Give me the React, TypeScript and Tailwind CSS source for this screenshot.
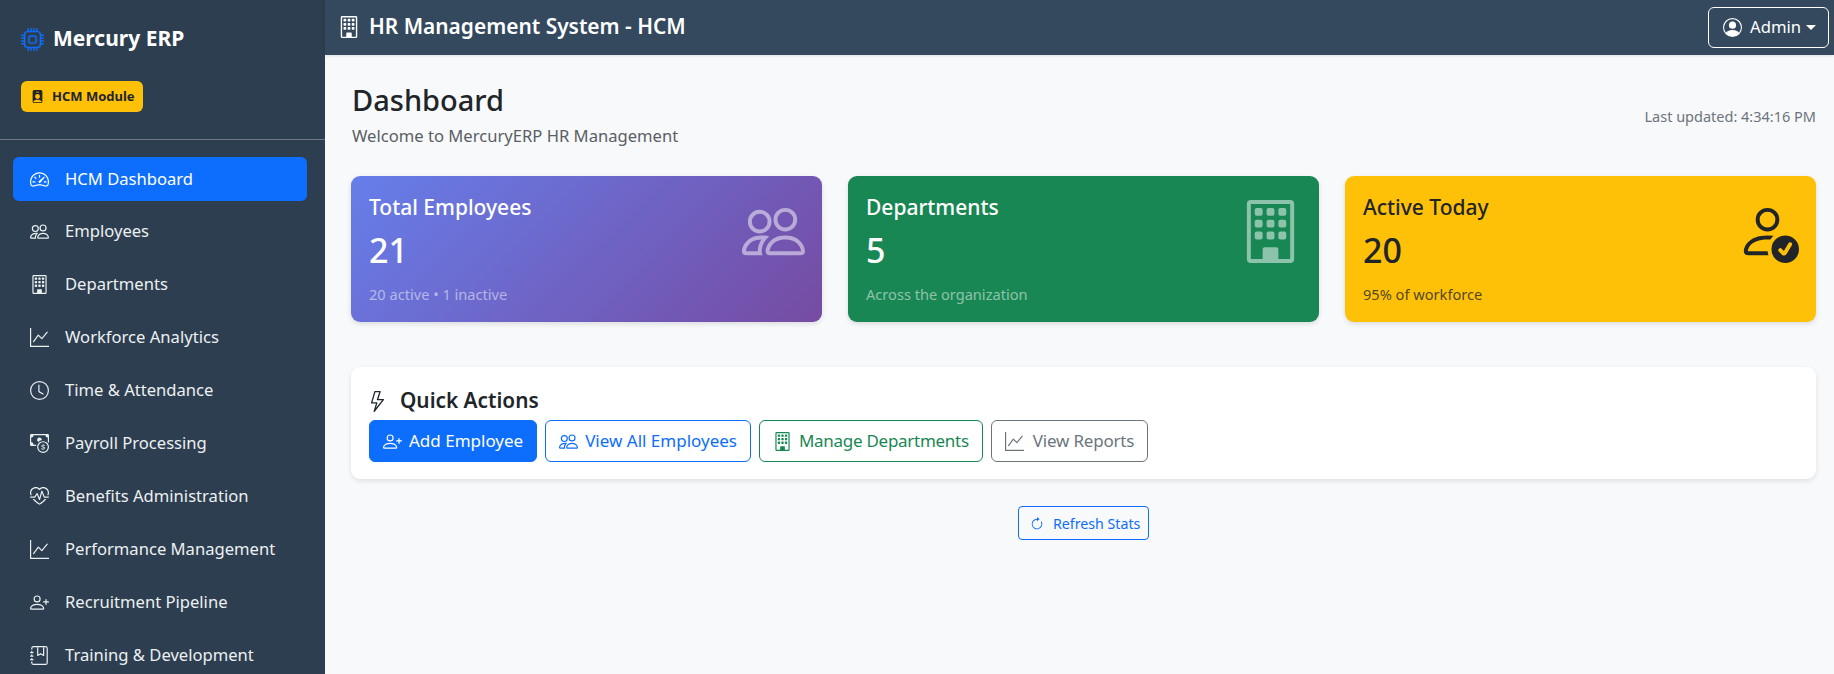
import React from "react";
import {
  BsCpu, BsPersonBadgeFill, BsSpeedometer2, BsPeople, BsBuilding, BsGraphUp, BsClock, BsCashCoin,
  BsHeartPulse, BsPersonPlus, BsJournalBookmark, BsLightning, BsArrowClockwise, BsPersonCircle, BsPersonCheck,
} from "react-icons/bs";

const nav = [
  { label: "HCM Dashboard", Icon: BsSpeedometer2, active: true },
  { label: "Employees", Icon: BsPeople },
  { label: "Departments", Icon: BsBuilding },
  { label: "Workforce Analytics", Icon: BsGraphUp },
  { label: "Time & Attendance", Icon: BsClock },
  { label: "Payroll Processing", Icon: BsCashCoin },
  { label: "Benefits Administration", Icon: BsHeartPulse },
  { label: "Performance Management", Icon: BsGraphUp },
  { label: "Recruitment Pipeline", Icon: BsPersonPlus },
  { label: "Training & Development", Icon: BsJournalBookmark },
];

function StatCard({ title, value, sub, Icon, bg, text, subC, iconC }: any) {
  return (
    <div className={`flex-1 h-[146px] rounded-[9px] shadow-[0_2px_5px_rgba(0,0,0,0.12)] pl-[18px] pr-[17px] pt-[16px] flex justify-between ${bg} ${text}`}>
      <div>
        <div className="text-[21px] leading-[30px] font-medium">{title}</div>
        <div className="text-[34px] leading-[44px] font-medium mt-[6px]">{value}</div>
        <div className={`text-[14.6px] leading-[21px] mt-[12px] ${subC}`}>{sub}</div>
      </div>
      <Icon className={`text-[63px] mt-[8px] ${iconC}`} />
    </div>
  );
}

function Btn({ Icon, label, cls }: any) {
  return (
    <div className={`h-[42px] px-[13px] border rounded-[6px] flex items-center text-[17px] ${cls}`}>
      <Icon className="text-[19px]" />
      <span>{label}</span>
    </div>
  );
}

export default function App() {
  return (
    <div className="flex h-[674px] overflow-hidden bg-[#f8f9fa] font-['Noto_Sans','Open_Sans',sans-serif] text-[#212529]">
      <aside className="w-[325px] shrink-0 bg-[#2c3e50] text-[#ecf0f1] overflow-hidden">
        <div className="h-[140px] border-b border-[#6b7784] pl-[21px] pt-[22px]">
          <div className="flex items-center gap-[9px] h-[34px]">
            <BsCpu className="text-[23px] text-[#0d6efd]" />
            <span className="text-[21px] font-bold text-white">Mercury ERP</span>
          </div>
          <div className="mt-[25px] inline-flex items-center gap-[8px] h-[31px] w-[122px] pl-[10px] rounded-[6px] bg-[#ffc107] text-[#212529]">
            <BsPersonBadgeFill className="text-[13px]" />
            <span className="text-[13px] font-bold">HCM Module</span>
          </div>
        </div>
        <nav className="px-[13px] pt-[17px]">
          {nav.map(({ label, Icon, active }) => (
            <div key={label} className={`h-[44px] mb-[8.9px] w-[294px] rounded-[6px] flex items-center pl-[17px] gap-[16px] ${active ? "bg-[#0d6efd] text-white" : ""}`}>
              <Icon className="text-[19px] shrink-0" />
              <span className="text-[16.6px] whitespace-nowrap">{label}</span>
            </div>
          ))}
        </nav>
      </aside>
      <div className="flex-1 min-w-0 flex flex-col">
        <header className="h-[55px] shrink-0 bg-[#34495e] text-white flex items-center justify-between pl-[13px] pr-[5px] pb-[1px] shadow-[0_1px_3px_rgba(0,0,0,0.1)]">
          <div className="flex items-center gap-[9px]">
            <BsBuilding className="text-[22px]" />
            <span className="text-[20.9px] font-semibold">HR Management System - HCM</span>
          </div>
          <div className="h-[41px] w-[121px] border border-white rounded-[6px] flex items-center pl-[14px] gap-[8px] text-[16.7px]">
            <BsPersonCircle className="text-[19px]" />
            <span>Admin</span>
            <span className="w-0 h-0 border-x-[5px] border-x-transparent border-t-[5px] border-t-white -ml-[3px]"></span>
          </div>
        </header>
        <main className="flex-1 pl-[26px] pr-[18px] pt-[25px]">
          <div className="flex justify-between items-start h-[96px]">
            <div>
              <h1 className="text-[29px] leading-[40px] font-medium pl-[1px]">Dashboard</h1>
              <p className="text-[16.6px] leading-[26px] mt-[3px] pl-[1px] text-[#595f66]">Welcome to MercuryERP HR Management</p>
            </div>
            <div className="text-[14.5px] leading-[21px] text-[#6c757d] mt-[26px]">Last updated: 4:34:16 PM</div>
          </div>
          <div className="flex gap-[26px]">
            <StatCard title="Total Employees" value="21" sub="20 active • 1 inactive" Icon={BsPeople}
              bg="bg-[linear-gradient(135deg,#667eea_0%,#764ba2_100%)]" text="text-white" subC="text-white/50" iconC="text-white/50" />
            <StatCard title="Departments" value="5" sub="Across the organization" Icon={BsBuilding}
              bg="bg-[#198754]" text="text-white" subC="text-white/50" iconC="text-white/50" />
            <StatCard title="Active Today" value="20" sub="95% of workforce" Icon={BsPersonCheck}
              bg="bg-[#ffc107]" text="text-[#212529]" subC="text-[#212529]/80" iconC="text-[#212529]" />
          </div>
          <section className="mt-[45px] h-[112px] bg-white rounded-[9px] shadow-[0_2px_5px_rgba(0,0,0,0.1)] px-[18px] pt-[16px]">
            <div className="flex items-center gap-[12px] h-[36px]">
              <BsLightning className="text-[21px] -ml-[2px]" />
              <span className="text-[20.8px] font-semibold">Quick Actions</span>
            </div>
            <div className="flex gap-[8px] mt-[1px]">
              <Btn Icon={BsPersonPlus} label="Add Employee" cls="gap-[7px] bg-[#0d6efd] border-[#0d6efd] text-white" />
              <Btn Icon={BsPeople} label="View All Employees" cls="gap-[7px] border-[#0d6efd] text-[#0d6efd]" />
              <Btn Icon={BsBuilding} label="Manage Departments" cls="gap-[7px] tracking-[-0.28px] border-[#198754] text-[#198754]" />
              <Btn Icon={BsGraphUp} label="View Reports" cls="gap-[9px] tracking-[-0.2px] border-[#6c757d] text-[#6c757d]" />
            </div>
          </section>
          <div className="flex justify-center mt-[27px]">
            <div className="h-[34px] w-[131px] border border-[#0d6efd] text-[#0d6efd] rounded-[4px] flex items-center pl-[11px] pt-[1px] gap-[9px] text-[14.2px]">
              <BsArrowClockwise className="text-[14px]" />
              <span>Refresh Stats</span>
            </div>
          </div>
        </main>
      </div>
    </div>
  );
}
